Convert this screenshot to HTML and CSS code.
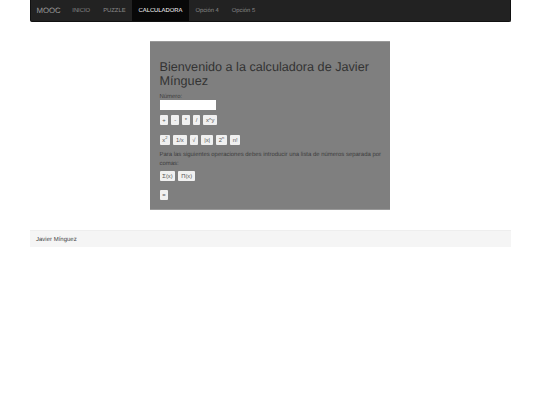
FILE: index.html
```html
<!DOCTYPE html>
<html lang="es">
<head>
    <meta charset="UTF-8">
    <title>MOOC - Calculadora</title>
    <link rel="stylesheet" href="styles.css">
</head>
<body>
    <div class="container">
        <!-- Barra de navegacion -->
        <nav class="navbar">
            <a class="brand" href="#">MOOC</a>
            <ul class="nav">
                <li><a href="#">INICIO</a></li>
                <li><a href="#">PUZZLE</a></li>
                <li class="active"><a href="#">CALCULADORA</a></li>
                <li><a href="#">Opción 4</a></li>
                <li><a href="#">Opción 5</a></li>
            </ul>
        </nav>

        <!-- Calculadora -->
        <div class="calc">
            <h1>Bienvenido a la calculadora de Javier Mínguez</h1>
            <label for="numero">Número:</label>
            <input type="text" id="numero">
            <div class="row">
                <button>+</button>
                <button>-</button>
                <button>*</button>
                <button>/</button>
                <button>x^y</button>
            </div>
            <div class="row row-funcs">
                <button>x<sup>2</sup></button>
                <button>1/x</button>
                <button>√</button>
                <button>|x|</button>
                <button>2<sup>n</sup></button>
                <button>n!</button>
            </div>
            <p>Para las siguientes operaciones debes introducir una lista de números separada por comas:</p>
            <div class="row row-list">
                <button>Σ(x)</button>
                <button>Π(x)</button>
            </div>
            <div class="row row-equals">
                <button>=</button>
            </div>
        </div>

        <footer class="footer">Javier Mínguez</footer>
    </div>
</body>
</html>
```

FILE: styles.css
```css
/* Global Styles */
body {
    font-family: "Liberation Sans", Arial, sans-serif;
    margin: 0;
    background: #fff;
    color: #333;
    text-rendering: geometricPrecision;
}
.container {
    width: 481px;
    margin-left: 29.5px;
}

/* Navbar */
.navbar {
    display: flex;
    align-items: stretch;
    height: 22px;
    box-sizing: border-box;
    background: #222;
    border: 1px solid #111;
    border-top: 0;
    border-radius: 0 0 2px 2px;
}
.brand {
    padding: 0 5px 0 6px;
    font-size: 7.8px;
    line-height: 22px;
    color: #9d9d9d;
    text-decoration: none;
}
.nav {
    display: flex;
    margin: 0;
    padding: 0;
    list-style: none;
}
.nav a {
    display: block;
    padding: 0 6.5px;
    height: 100%;
    font-size: 5.85px;
    line-height: 23px;
    color: #8a8a8a;
    text-decoration: none;
}
.nav .active a {
    background: #080808;
    color: #fff;
}

/* Calculadora */
.calc {
    width: 240px;
    height: 169px;
    box-sizing: border-box;
    margin: 19px auto 20px;
    padding: 18px 8px 0 9.5px;
    background: #7f7f7f;
    border: 1px solid #999;
    border-width: 1px 0;
    font-size: 5.95px;
    line-height: 9px;
}
h1 {
    margin: 0 0 4px;
    font-size: 12.65px;
    font-weight: 500;
    line-height: 14px;
    color: #333;
}
label {
    display: block;
    height: 8px;
    line-height: 10px;
    color: #3d3d3d;
}
input {
    display: block;
    width: 56px;
    height: 10px;
    box-sizing: border-box;
    margin: 0;
    padding: 0;
    border: 0;
    background: #fff;
}
.row {
    display: flex;
    gap: 3px;
    margin-top: 5px;
}
.row-funcs {
    margin-top: 10px;
}
.row-list {
    margin-top: 2px;
}
.row-equals {
    margin-top: 9px;
}
button {
    height: 10px;
    padding: 0 2.8px;
    border: 0;
    border-radius: 1px;
    background: #f0f0f0;
    color: #555;
    font-family: inherit;
    font-size: 5.8px;
    line-height: 10px;
}
sup {
    font-size: 4px;
    line-height: 0;
}
p {
    margin: 6px 0 0;
    color: #3d3d3d;
}

/* Footer */
.footer {
    height: 16px;
    padding-left: 6.5px;
    background: #f5f5f5;
    border-top: 1px solid #eee;
    font-size: 6px;
    line-height: 18px;
    color: #444;
}
```
